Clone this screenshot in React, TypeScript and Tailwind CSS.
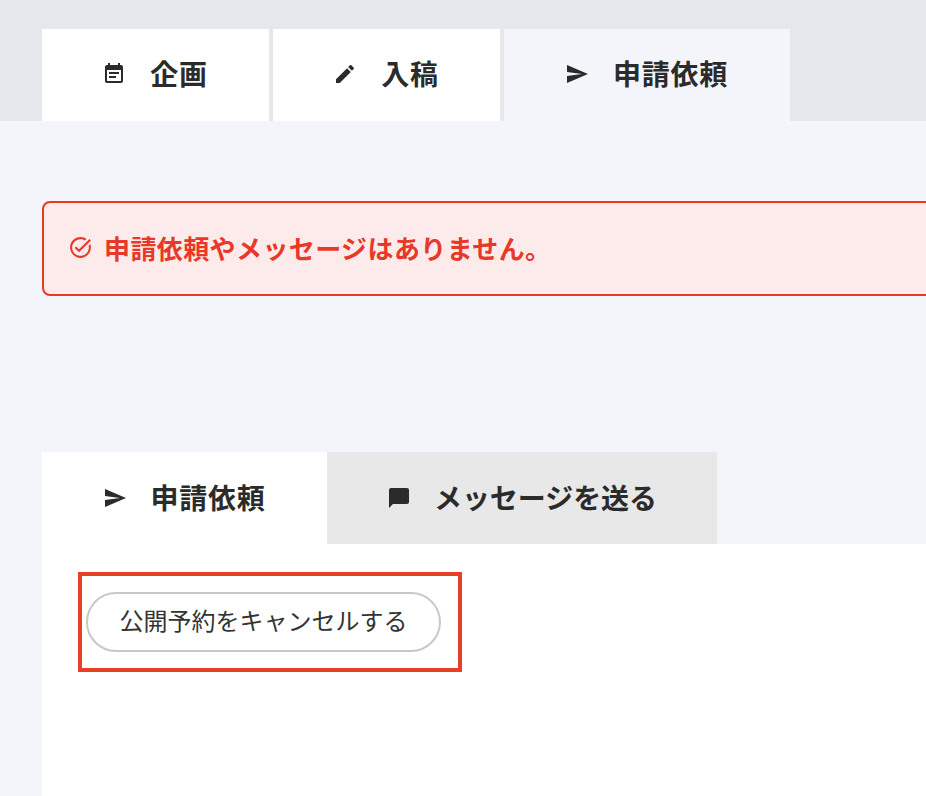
import React from 'react';

const FONT = "font-['Noto_Sans_CJK_JP','Noto_Sans',sans-serif]";

const ICONS = {
  event: 'M17 10H7v2h10v-2zm2-7h-1V1h-2v2H8V1H6v2H5c-1.11 0-1.99.9-1.99 2L3 19c0 1.1.89 2 2 2h14c1.1 0 2-.9 2-2V5c0-1.1-.9-2-2-2zm0 16H5V8h14v11zm-5-5H7v2h7v-2z',
  edit: 'M3 17.25V21h3.75L17.81 9.94l-3.75-3.75L3 17.25zM20.71 7.04c.39-.39.39-1.02 0-1.41l-2.34-2.34c-.39-.39-1.02-.39-1.41 0l-1.83 1.83 3.75 3.75 1.83-1.83z',
  send: 'M2.01 21L23 12 2.01 3 2 10l15 2-15 2z',
  chat: 'M20 2H4c-1.1 0-2 .9-2 2v18l4-4h14c1.1 0 2-.9 2-2V4c0-1.1-.9-2-2-2z',
  task: 'M22 5.18L10.59 16.6l-4.24-4.24 1.41-1.41 2.83 2.83 10-10L22 5.18zm-2.21 5.04c.13.57.21 1.17.21 1.78 0 4.42-3.58 8-8 8s-8-3.58-8-8 3.58-8 8-8c1.58 0 3.04.46 4.28 1.25l1.44-1.44C16.1 2.67 14.13 2 12 2 6.48 2 2 6.48 2 12s4.48 10 10 10 10-4.48 10-10c0-1.19-.22-2.33-.6-3.39l-1.61 1.61z',
};

const Icon = ({ name, className }: { name: keyof typeof ICONS; className?: string }) => (
  <svg viewBox="0 0 24 24" fill="currentColor" className={className}>
    <path d={ICONS[name]} />
  </svg>
);

const TabLabel = ({ icon, label, tight }: { icon: keyof typeof ICONS; label: string; tight?: boolean }) => (
  <span className={`flex items-center text-[28px] font-bold leading-none text-[#2b2b2b] ${tight ? 'gap-[23px] tracking-[-0.05px]' : 'gap-6 pr-px tracking-[0.7px]'}`}>
    <Icon name={icon} className="w-6 h-6 shrink-0" />
    <span className="-translate-y-px">{label}</span>
  </span>
);

export default function App() {
  return (
    <div className={`${FONT} h-[796px] overflow-hidden bg-[#f4f5fa]`}>
      {/* Top tabs */}
      <div className="h-[121px] bg-[#e6e7ec] pt-[29px] pl-[42px] flex gap-1">
        <div className="w-[227px] h-[92px] pb-0.5 bg-white flex items-center justify-center">
          <TabLabel icon="event" label="企画" />
        </div>
        <div className="w-[227px] h-[92px] pb-0.5 bg-white flex items-center justify-center">
          <TabLabel icon="edit" label="入稿" />
        </div>
        <div className="w-[286px] h-[92px] pb-0.5 bg-[#f4f5fa] flex items-center justify-center">
          <TabLabel icon="send" label="申請依頼" />
        </div>
      </div>

      {/* Alert */}
      <div className="mt-20 ml-[42px] w-[1000px] h-[95px] pb-0.5 rounded-lg border-2 border-[#e83828] bg-[#fdebeb] pl-[24px] flex items-center gap-[11px] text-[#e83828]">
        <Icon name="task" className="w-[25px] h-[25px] shrink-0" />
        <span className="text-[26px] font-bold tracking-[0.4px] leading-none">申請依頼やメッセージはありません。</span>
      </div>

      {/* Request panel */}
      <div className="mt-[156px] ml-[42px]">
        <div className="flex">
          <div className="w-[285px] h-[92px] bg-white flex items-center justify-center">
            <TabLabel icon="send" label="申請依頼" />
          </div>
          <div className="w-[390px] h-[92px] bg-[#e8e8e8] flex items-center justify-center">
            <TabLabel icon="chat" label="メッセージを送る" tight />
          </div>
        </div>
        <div className="h-[252px] bg-white pt-7 pl-9">
          <div className="w-[384px] h-[100px] border-[4px] border-[#e84025] flex items-center pl-1">
            <button className="w-[355px] h-[60px] pb-1 rounded-full border-2 border-[#c8c8c8] bg-white text-2xl tracking-[0px] leading-none text-[#333333]">
              公開予約をキャンセルする
            </button>
          </div>
        </div>
      </div>
    </div>
  );
}
